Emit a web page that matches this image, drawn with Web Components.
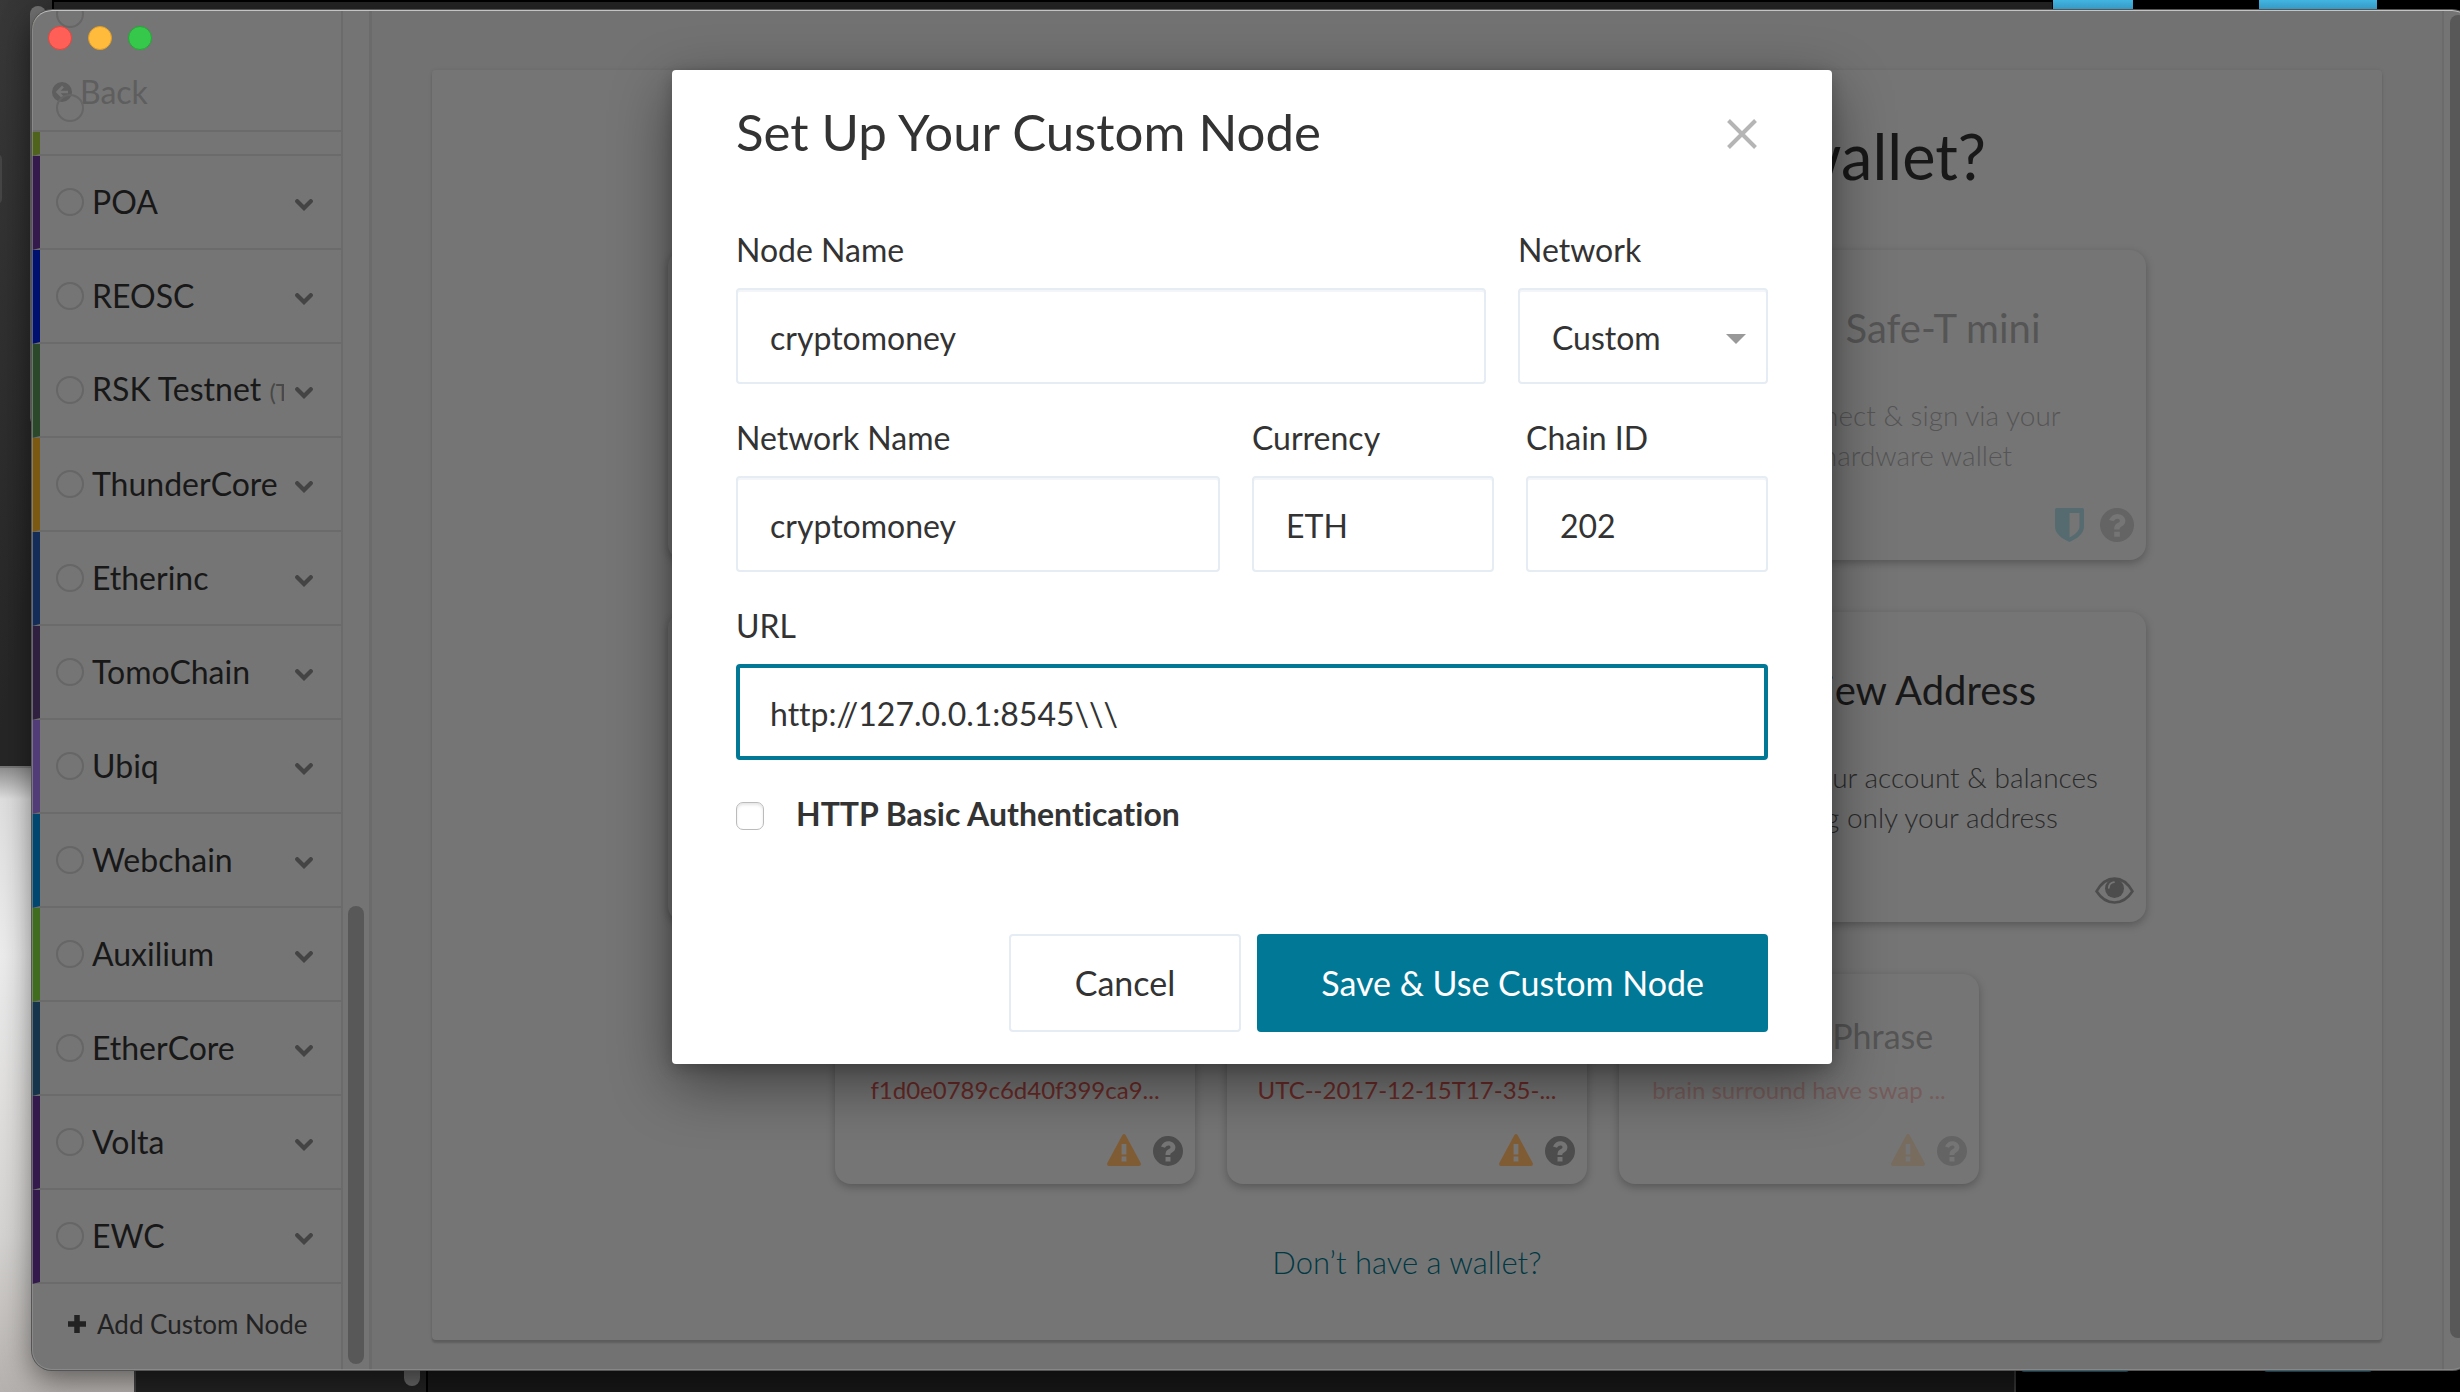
<!DOCTYPE html>
<html lang="en">
<head>
<meta charset="utf-8">
<title>Custom Node</title>
<style>
  html, body { margin: 0; height: 100%; }
  body {
    font-family: Lato, "Open Sans", sans-serif;
    font-variant-ligatures: none;
    color: #333;
    --surface: #757575;
    --page: #727272;
    --rule: #6b6b6b;
    --ink: #181818;
    --faded: #555;
    --thumb: #585858;
    --teal: #007896;
    --field-border: #e5ecf3;
  }
</style>
</head>
<body>
<desk-top>
  <app-window>
    <node-sidebar slot="sidebar">
      <network-item color="#50631c"></network-item>
      <network-item color="#50631c"></network-item>
      <network-item color="#34194c">POA</network-item>
      <network-item color="#00106f">REOSC</network-item>
      <network-item color="#2c482b" note="(T">RSK Testnet</network-item>
      <network-item color="#7c5913">ThunderCore</network-item>
      <network-item color="#142c58">Etherinc</network-item>
      <network-item color="#2f2040">TomoChain</network-item>
      <network-item color="#523c78">Ubiq</network-item>
      <network-item color="#00466f">Webchain</network-item>
      <network-item color="#3f6c1f">Auxilium</network-item>
      <network-item color="#16344c">EtherCore</network-item>
      <network-item color="#34194c">Volta</network-item>
      <network-item color="#34194c">EWC</network-item>
    </node-sidebar>
    <scroll-track></scroll-track>
    <wallet-panel>
      <wallet-card></wallet-card>
      <wallet-card></wallet-card>
      <wallet-card disabled icons="shield help" device>
        Safe-T mini
        <span slot="text">Connect &amp; sign via your<br>hardware wallet</span>
      </wallet-card>
      <wallet-card></wallet-card>
      <wallet-card></wallet-card>
      <wallet-card icons="eye">
        View Address
        <span slot="text">View your account &amp; balances<br>using only your address</span>
      </wallet-card>
      <wallet-card slot="small" small icons="warn help">
        <span slot="text">f1d0e0789c6d40f399ca9...</span>
      </wallet-card>
      <wallet-card slot="small" small icons="warn help">
        <span slot="text">UTC--2017-12-15T17-35-...</span>
      </wallet-card>
      <wallet-card slot="small" small disabled icons="warn help">
        Mnemonic Phrase
        <span slot="text">brain surround have swap ...</span>
      </wallet-card>
    </wallet-panel>
    <scroll-track main></scroll-track>
    <custom-node-dialog slot="overlay"></custom-node-dialog>
  </app-window>
</desk-top>

<script>
const define = (name, render) => customElements.define(name, class extends HTMLElement {
  connectedCallback() {
    if (this.shadowRoot) return;
    this.attachShadow({ mode: 'open' }).innerHTML =
      '<style>:host,*,*::before,*::after{box-sizing:border-box}</style>' + render(this);
  }
});

const ICONS = {
  help: '<svg class="help" viewBox="0 0 30 30" aria-hidden="true"><path fill="currentColor" fill-rule="evenodd" d="M15 0a15 15 0 1 1 0 30a15 15 0 0 1 0-30zM8 10.600c1.700-3.600 4.100-5.400 7.300-5.400c3.900 0 7.100 2.600 7.100 6.100c0 2.700-1.400 4-3.300 5.100c-1.300.8-1.800 1.200-1.800 2.600h-4.800c0-3 .6-4.300 3-5.700c1.500-.8 2-1.200 2-2.100c0-1-.9-1.700-2.100-1.700c-1.400 0-2.200.7-3.500 2.300zM12.500 21h5v4.400h-5z"/></svg>',
  warn: '<svg class="warn" viewBox="0 0 34 32" aria-hidden="true"><path fill="currentColor" fill-rule="evenodd" d="M15.300 1.200q1.700-2.200 3.400 0l15 27.800q.9 2.600-1.700 3h-30q-2.600-.4-1.700-3zM14.600 10h4.800v10.400h-4.800zM14.600 22.600h4.800v4.800h-4.800z"/></svg>',
  shield: '<svg class="shield" viewBox="0 0 29 34" aria-hidden="true"><path fill="currentColor" fill-rule="evenodd" d="M0 1.500q0-1.500 1.500-1.500h26q1.500 0 1.500 1.500v17c0 7-6.500 12-14.500 15.500c-8-3.500-14.500-8.500-14.500-15.500zM14.500 5v24.500c6-3.400 10-6.800 10-11v-13.500z"/></svg>',
  eye: '<svg class="eye" viewBox="0 0 39 27" aria-hidden="true"><path fill="none" stroke="currentColor" stroke-width="2.600" d="M1.500 14.300c4.500-8 11-12.700 18-12.700s13.500 4.700 18 12.700c-4.500 7-11 11.200-18 11.200s-13.500-4.200-18-11.200z"/><circle cx="19.500" cy="11.500" r="9.500" fill="currentColor"/><path fill="none" stroke="#757575" stroke-width="1.800" stroke-linecap="round" d="M13.800 10.800q.3-5 5.200-5.600"/></svg>'
};

define('desk-top', () => `
  <style>
    :host { display: flex; position: relative; min-height: 100vh; overflow: hidden; background: #000; }
    .back, .back div { position: absolute; }
    .back { inset: 0; overflow: hidden; }
    .editor { left: 0; top: 0; width: 52px; height: 768px; background: linear-gradient(100deg, #383838, #262626 70%); border-bottom: 2px solid #777; }
    .wall { left: 0; top: 768px; width: 134px; bottom: 0; background: linear-gradient(#8f8f8f, #dedede 5%, #ececec 30%, #d5d3d1 75%, #b5b1ae); }
    .strip { left: 54px; top: 2px; width: 1998px; height: 20px; background: #242424; }
    .tile { top: 0; height: 13px; background: linear-gradient(#45bdec, #3aa6d6); }
    .t1 { left: 2053px; width: 80px; }
    .t2 { left: 2259px; width: 118px; }
    .edge { left: 30px; top: 6px; width: 16px; height: 420px; border-radius: 8px; background: #707070; }
    .handle { left: -8px; top: 154px; width: 10px; height: 50px; border-radius: 5px; background: #454545; }
    .dock { left: 134px; bottom: 0; width: 292px; height: 30px; background: #222; border-left: 2px solid #444; }
    .grip { left: 404px; bottom: 6px; width: 16px; height: 30px; border-radius: 8px; background: #686868; }
    .dock2 { left: 428px; bottom: 0; width: 1588px; height: 30px; background: #181818; border-right: 2px solid #333; }
    .s1, .s2 { bottom: 20px; height: 10px; background: #17647f; border-radius: 3px; width: 108px; }
    .s1 { left: 2021px; }
    .s2 { left: 2264px; }
    ::slotted(*) { flex: 1; }
  </style>
  <div class="back" aria-hidden="true">
    <div class="wall"></div><div class="editor"></div><div class="strip"></div>
    <div class="tile t1"></div><div class="tile t2"></div><div class="edge"></div><div class="handle"></div>
    <div class="dock"></div><div class="grip"></div><div class="dock2"></div><div class="s1"></div><div class="s2"></div>
  </div>
  <slot></slot>`);

define('app-window', () => `
  <style>
    :host { display: flex; position: relative; margin: 10px -12px 22px 32px; border-radius: 20px; overflow: hidden;
      background: var(--page); box-shadow: 0 0 0 1px #555, 0 10px 30px rgba(0,0,0,.5); }
    .frame { position: absolute; inset: 0; border-radius: 20px; pointer-events: none; z-index: 3;
      box-shadow: inset 0 2px 0 -1px #c4c4c4, inset 0 0 0 1px rgba(150,150,150,.6); }
  </style>
  <slot name="sidebar"></slot><slot></slot><div class="frame"></div><slot name="overlay"></slot>`);

define('node-sidebar', () => `
  <style>
    :host { display: flex; flex-direction: column; position: relative; flex: 0 0 309px; background: var(--surface); overflow: hidden; }
    header { position: absolute; inset: 0 0 auto 0; z-index: 1; height: 122px; padding: 16px 16px 0; background: var(--surface);
      border-bottom: 2px solid var(--rule); display: flex; flex-direction: column; gap: 22px; }
    .lights { display: flex; gap: 16px; }
    .lights button { width: 24px; height: 24px; padding: 0; border-radius: 50%; border: 1px solid; }
    .lights .close { background: #ff5f57; border-color: #e2463f; }
    .lights .min { background: #febb3c; border-color: #dd9c2c; }
    .lights .max { background: #35c84b; border-color: #23a835; }
    .back { display: flex; align-items: center; gap: 8px; padding: 0 4px; font: 32px/40px Lato, sans-serif; color: #5e5e5e; text-decoration: none; }
    .back svg { width: 20px; height: 20px; }
    .list { flex: 1 1 0; min-height: 0; display: flex; flex-direction: column; justify-content: flex-end; }
    .add { flex: none; height: 86px; display: flex; align-items: center; gap: 10px; padding: 0 0 6px 35px; border: 0; background: none;
      font: 26px/32px Lato, sans-serif; color: #222; white-space: nowrap; }
    .add svg { width: 20px; height: 20px; flex: none; }
  </style>
  <header>
    <div class="lights"><button class="close" aria-label="Close"></button><button class="min" aria-label="Minimise"></button><button class="max" aria-label="Zoom"></button></div>
    <a class="back" href="#"><svg viewBox="0 0 20 20" aria-hidden="true"><circle cx="10" cy="10" r="10" fill="currentColor"/><path d="M16 10H6M11 4.500L5.500 10L11 15.500" fill="none" stroke="#757575" stroke-width="2.600"/></svg>Back</a>
  </header>
  <div class="list"><slot></slot></div>
  <button class="add"><svg viewBox="0 0 20 20" aria-hidden="true"><path d="M10 1v18M1 10h18" stroke="currentColor" stroke-width="5.500"/></svg>Add Custom Node</button>`);

define('network-item', el => `
  <style>
    :host { display: flex; align-items: center; flex: none; height: 94px; padding-right: 28px;
      border-left: 8px solid ${el.getAttribute('color')}; border-bottom: 2px solid var(--rule); }
    label { display: flex; align-items: center; flex: 1; min-width: 0; gap: 8px; padding-left: 16px; }
    input { appearance: none; position: relative; z-index: 2; flex: none; width: 28px; height: 28px; margin: 0; border: 2px solid #666; border-radius: 50%; }
    .name { overflow: hidden; white-space: nowrap; font-size: 32px; line-height: 40px; color: var(--ink); }
    small { font-size: 24px; color: #484848; }
    button { flex: none; width: 18px; height: 18px; margin: 6px 0 0 11px; padding: 0; border: 0; background: none; color: #444; }
    svg { display: block; width: 18px; height: 12px; }
  </style>
  <label><input type="radio" name="network"><span class="name"><slot></slot>${el.hasAttribute('note') ? ` <small>${el.getAttribute('note')}</small>` : ''}</span></label>
  <button aria-label="Expand"><svg viewBox="0 0 18 12" aria-hidden="true"><path d="M2.200 2.200L9 9L15.800 2.200" fill="none" stroke="currentColor" stroke-width="4.200" stroke-linecap="round"/></svg></button>`);

define('scroll-track', () => `
  <style>
    :host { display: flex; flex-direction: column; justify-content: flex-end; flex: none; width: 31px; padding: 6px 5px;
      background: #747474; border: solid var(--rule); border-width: 0 3px 0 2px; }
    :host([main]) { width: 30px; justify-content: flex-start; border-width: 0 0 0 2px; padding: 5px 6px; }
    div { height: 34%; border-radius: 8px; background: var(--thumb); }
    :host([main]) div { height: 98%; }
  </style><div></div>`);

define('wallet-panel', () => `
  <style>
    :host { display: flex; flex: 1; min-width: 0; padding: 60px 60px 30px; }
    section { flex: 1; display: flex; flex-direction: column; align-items: center; padding: 50px 0 58px; border-radius: 4px;
      background: var(--surface); box-shadow: 0 3px 2px rgba(0,0,0,.16), 0 0 4px rgba(0,0,0,.08); }
    h1 { margin: 0 0 58px; font-size: 63px; line-height: 72px; font-weight: 400; color: var(--ink); white-space: nowrap; }
    .large { display: grid; grid-template-columns: repeat(3, 458px); gap: 52px; margin-bottom: 52px; }
    .small { display: grid; grid-template-columns: repeat(3, 360px); gap: 32px; margin-bottom: 58px; }
    a { font-size: 31px; line-height: 40px; font-weight: 300; color: #003843; text-decoration: none; }
  </style>
  <section>
    <h1>How would you like to access your wallet?</h1>
    <div class="large"><slot></slot></div>
    <div class="small"><slot name="small"></slot></div>
    <a href="#">Don’t have a wallet?</a>
  </section>`);

define('wallet-card', el => `
  <style>
    :host { display: flex; flex-direction: column; align-items: center; height: 310px; padding: 54px 12px 18px; border-radius: 16px;
      background: var(--surface); box-shadow: 0 3px 8px rgba(0,0,0,.26); color: var(--ink); text-align: center; white-space: nowrap; }
    :host([small]) { height: 210px; padding-top: 42px; }
    h2 { display: flex; align-items: center; gap: 12px; margin: 0 0 43px; min-height: 48px; font-size: 40px; line-height: 48px; font-weight: 400; }
    h2 i { width: 40px; height: 40px; }
    .text { margin: 0; font-size: 28px; line-height: 40px; font-weight: 300; color: #2a2a2a; }
    :host([small]) h2 { margin-bottom: 18px; min-height: 40px; font-size: 34px; line-height: 40px; }
    :host([small]) .text { font-size: 24px; line-height: 32px; font-weight: 400; color: #692a27; }
    :host([disabled]) h2 { color: var(--faded); }
    :host([disabled]) .text { color: var(--faded); }
    :host([small][disabled]) .text { color: #755c5b; }
    .icons { display: flex; align-self: stretch; justify-content: flex-end; align-items: flex-end; gap: 16px; margin-top: auto; color: #4d4d4d; }
    :host([small]) .icons { gap: 12px; }
    .icons svg { display: block; }
    .help { width: 34px; height: 34px; }
    :host([small]) .help { width: 30px; height: 30px; }
    .warn { width: 34px; height: 32px; color: #805c34; }
    .shield { width: 29px; height: 34px; color: #566b70; }
    .eye { width: 39px; height: 27px; }
    :host([disabled]) .help { color: #646464; }
    :host([disabled]) .warn { color: #786c5e; }
  </style>
  <h2>${el.hasAttribute('device') ? '<i></i>' : ''}<slot></slot></h2>
  <p class="text"><slot name="text"></slot></p>
  <div class="icons">${(el.getAttribute('icons') || '').split(' ').map(n => ICONS[n] || '').join('')}</div>`);

define('text-field', el => `
  <style>
    :host { display: flex; flex-direction: column; gap: 14px; min-width: 0; flex: ${el.getAttribute('grow') || 1} 1 0; }
    label { font-size: 32px; line-height: 48px; }
    .box { display: grid; align-items: center; }
    input, select { grid-area: 1 / 1; appearance: none; width: 100%; height: 96px; margin: 0; padding: 4px 32px 0; border: 2px solid var(--field-border); border-radius: 4px;
      background: #fff; box-shadow: inset 0 2px 0 #f3f5f8; font: 32px/40px Lato, sans-serif; font-variant-ligatures: none; color: #333; outline: none; }
    input { padding-top: 2px; }
    :host([active]) input { padding: 2px 30px 0; border: 4px solid var(--teal); box-shadow: none; }
    svg { grid-area: 1 / 1; justify-self: end; width: 20px; height: 10px; margin: 6px 22px 0 0; pointer-events: none; }
  </style>
  <label for="f">${el.getAttribute('label')}</label>
  <div class="box">${el.hasAttribute('select')
    ? `<select id="f"><option>${el.getAttribute('value')}</option></select><svg viewBox="0 0 20 10" aria-hidden="true"><path d="M0 0h20L10 10z" fill="#999"/></svg>`
    : `<input id="f" type="text" value="${el.getAttribute('value')}">`}</div>`);

define('custom-node-dialog', () => `
  <style>
    :host { position: absolute; inset: 0; z-index: 4; display: flex; justify-content: center; align-items: flex-start; padding-top: 60px; }
    form { width: 1160px; max-width: 100%; display: flex; flex-direction: column; gap: 30px; padding: 30px 64px 32px; border-radius: 4px;
      background: #fff; box-shadow: 0 20px 60px rgba(0,0,0,.45), 0 4px 16px rgba(0,0,0,.2); }
    header { display: flex; align-items: center; justify-content: space-between; margin-bottom: 32px; }
    h2 { margin: 0; font-size: 51px; line-height: 64px; font-weight: 400; }
    .x { width: 30px; height: 30px; margin: 4px 11px 0 0; padding: 0; border: 0; background: none; color: #b5b5b5; }
    .x svg { display: block; width: 30px; height: 30px; }
    .row { display: flex; gap: 32px; }
    .check { display: flex; align-items: center; gap: 32px; font-size: 32px; line-height: 48px; font-weight: 700; }
    .check input { appearance: none; width: 28px; height: 28px; margin: 4px 0 0; border: 1px solid #bbb; border-radius: 7px; background: #fff; box-shadow: inset 0 2px 3px #e6e6e6; }
    footer { display: flex; justify-content: flex-end; gap: 16px; margin-top: 66px; }
    footer button { height: 98px; padding: 0 64px; border: 2px solid var(--field-border); border-radius: 4px; background: #fff; font: 34px/40px Lato, sans-serif; color: #333; }
    footer .primary { padding: 0 62px; border-color: var(--teal); background: var(--teal); color: #fff; }
  </style>
  <form role="dialog" aria-labelledby="t">
    <header>
      <h2 id="t">Set Up Your Custom Node</h2>
      <button class="x" type="button" aria-label="Close"><svg viewBox="0 0 30 30" aria-hidden="true"><path d="M1.500 1.500L28.500 28.500M28.500 1.500L1.500 28.500" stroke="currentColor" stroke-width="4"/></svg></button>
    </header>
    <div class="row">
      <text-field label="Node Name" value="cryptomoney" grow="3"></text-field>
      <text-field label="Network" value="Custom" select></text-field>
    </div>
    <div class="row">
      <text-field label="Network Name" value="cryptomoney" grow="2"></text-field>
      <text-field label="Currency" value="ETH"></text-field>
      <text-field label="Chain ID" value="202"></text-field>
    </div>
    <div class="row"><text-field label="URL" value="http://127.0.0.1:8545&#92;&#92;&#92;" active></text-field></div>
    <label class="check"><input type="checkbox">HTTP Basic Authentication</label>
    <footer><button type="button">Cancel</button><button class="primary" type="button">Save &amp; Use Custom Node</button></footer>
  </form>`);
</script>
</body>
</html>
